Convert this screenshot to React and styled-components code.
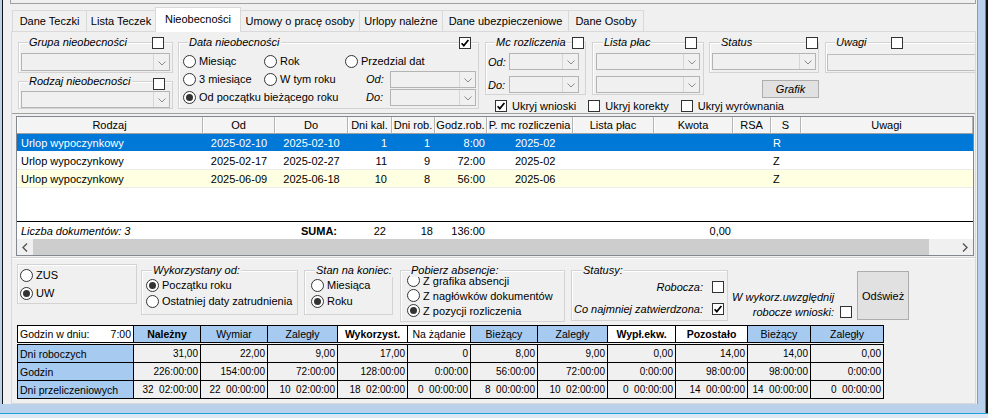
import React from 'react';
import styled, { createGlobalStyle } from 'styled-components';

const GlobalStyle = createGlobalStyle`
  html, body {
    margin: 0;
    padding: 0;
    background: #b9d1ea;
  }
  body {
    font-family: "Liberation Sans", Arial, sans-serif;
    font-size: 11px;
    color: #000;
  }
  *, *::before, *::after {
    box-sizing: border-box;
  }
`;

const Frame = styled.div`
  width: 988px;
  height: 418px;
  overflow: hidden;
  padding: 0 10px 14px 2px;
  background: #b9d1ea;
  box-shadow: inset 0 -4px 0 #dde8f4, inset 0 -5px 0 #1aa3dc, inset -2px 0 0 #111, inset -3px 0 0 #1aa3dc;
`;

const Window = styled.div`
  height: 100%;
  display: flex;
  flex-direction: column;
  background: #f0f0f0;
  border-left: 1px solid #111;
  border-right: 1px solid #9a9a9a;
`;

const TopStub = styled.div`
  height: 4px;
  flex: none;
  margin: 0 1px 0 7px;
  border: 1px solid #a0a0a0;
  border-top: none;
`;

const TabStrip = styled.div`
  height: 27px;
  flex: none;
  display: flex;
  align-items: flex-end;
  padding-left: 10px;
`;

const Tab = styled.div`
  position: relative;
  z-index: ${p => (p.$active ? 2 : 1)};
  width: ${p => p.$w}px;
  height: ${p => (p.$active ? 25 : 21)}px;
  margin: 0 0 ${p => (p.$active ? -1 : 0)}px -1px;
  padding-bottom: ${p => (p.$active ? 3 : 0)}px;
  display: flex;
  align-items: center;
  justify-content: center;
  white-space: nowrap;
  background: ${p => (p.$active ? '#fff' : '#f0f0f0')};
  border: 1px solid #d9d9d9;
  border-bottom: none;
`;

const TabPanel = styled.div`
  flex: 1;
  margin-left: 8px;
  width: 965px;
  display: flex;
  flex-direction: column;
  overflow: hidden;
  border: 1px solid #d9d9d9;
`;

/* ---------- common controls ---------- */

const Group = styled.div`
  position: relative;
  flex: none;
  width: ${p => p.$w}px;
  height: ${p => p.$h}px;
  margin: ${p => p.$m || '0'};
  border: 1px solid #d3d3d3;
  box-shadow: inset 1px 1px 0 #fff;
`;

const GroupTitle = styled.span`
  position: absolute;
  top: -8px;
  left: ${p => p.$x}px;
  padding: 0 1px;
  line-height: 14px;
  font-style: italic;
  white-space: nowrap;
  background: #f0f0f0;
`;

const GroupTick = styled.span`
  position: absolute;
  top: ${p => p.$y}px;
  left: ${p => p.$x}px;
  display: flex;
`;

const CheckBox = styled.span`
  width: 12px;
  height: 12px;
  flex: none;
  display: inline-flex;
  align-items: center;
  justify-content: center;
  border: 1px solid #333;
  background: #fff;
`;

const Check = ({ on }) => (
  <CheckBox>
    {on && (
      <svg width="10" height="10" viewBox="0 0 10 10">
        <path d="M1.6 5.2 L3.8 7.6 L8.4 2" fill="none" stroke="#000" strokeWidth="1.7" />
      </svg>
    )}
  </CheckBox>
);

const RadioCircle = styled.span`
  width: 13px;
  height: 13px;
  flex: none;
  display: inline-flex;
  align-items: center;
  justify-content: center;
  border: 1px solid #333;
  border-radius: 50%;
  background: #fff;
  &::after {
    content: '';
    width: 7px;
    height: 7px;
    border-radius: 50%;
    background: ${p => (p.$on ? '#333' : 'transparent')};
  }
`;

const RadioRow = styled.div`
  display: flex;
  align-items: center;
  gap: 3px;
  height: ${p => p.$h || 16}px;
  white-space: nowrap;
  grid-column: ${p => (p.$span ? `span ${p.$span}` : 'auto')};
`;

const Radio = ({ on, h, span, children }) => (
  <RadioRow $h={h} $span={span}>
    <RadioCircle $on={on} />
    {children}
  </RadioRow>
);

const ComboBox = styled.div`
  width: ${p => p.$w}px;
  height: ${p => p.$h || 17}px;
  flex: none;
  display: flex;
  justify-content: flex-end;
  border: 1px solid #b4b4b4;
  background: #f0f0f0;
`;

const ComboButton = styled.span`
  width: 16px;
  height: 100%;
  display: flex;
  align-items: center;
  justify-content: center;
  padding-top: 2px;
  border-left: 1px solid #d6d6d6;
`;

const Combo = ({ w, h }) => (
  <ComboBox $w={w} $h={h}>
    <ComboButton>
      <svg width="8" height="5" viewBox="0 0 8 5">
        <path d="M0.5 0.5 L4 4 L7.5 0.5" fill="none" stroke="#8a8a8a" strokeWidth="1" />
      </svg>
    </ComboButton>
  </ComboBox>
);

const Caption = styled.span`
  font-style: italic;
  width: ${p => p.$w}px;
  flex: none;
`;

const Button = styled.div`
  flex: none;
  width: ${p => p.$w}px;
  height: ${p => p.$h}px;
  margin: ${p => p.$m || '0'};
  display: flex;
  align-items: center;
  justify-content: center;
  font-style: ${p => (p.$italic ? 'italic' : 'normal')};
  background: #e1e1e1;
  border: 1px solid #adadad;
`;

/* ---------- filter area ---------- */

const FilterArea = styled.div`
  height: 81px;
  flex: none;
  display: flex;
  align-items: flex-start;
  padding-left: 6px;
`;

const Column = styled.div`
  display: flex;
  flex-direction: column;
  flex: none;
  margin: ${p => p.$m || '0'};
`;

const Inner = styled.div`
  display: flex;
  flex-direction: column;
  gap: ${p => p.$gap || 0}px;
  padding: ${p => p.$pad};
`;

const DateGrid = styled.div`
  display: grid;
  grid-template-columns: 81px 81px auto;
  grid-auto-rows: 18px;
  align-items: center;
  padding: 9px 0 0 4px;
`;

const RangeRow = styled.div`
  display: flex;
  align-items: center;
  padding-left: 21px;
`;

const FieldRow = styled.div`
  display: flex;
  align-items: center;
`;

const GroupRow = styled.div`
  display: flex;
  align-items: flex-start;
  margin-top: 10px;
`;

const TextInput = styled.div`
  width: 150px;
  height: 17px;
  margin: 11px 0 0 1px;
  border: 1px solid #bdbdbd;
  background: #f0f0f0;
`;

const OptionRow = styled.div`
  display: flex;
  align-items: center;
  gap: 12px;
  padding-left: 10px;
  margin-top: 1px;
  height: 13px;
`;

const CheckLabel = styled.div`
  display: flex;
  align-items: center;
  gap: ${p => p.$gap || 5}px;
  white-space: nowrap;
  font-style: ${p => (p.$italic ? 'italic' : 'normal')};
`;

const Rule = styled.div`
  flex: none;
  height: ${p => p.$h}px;
  margin-top: ${p => p.$top || 0}px;
  border-top: 1px solid ${p => p.$c};
  border-bottom: ${p => (p.$light ? '1px solid #fff' : 'none')};
`;

/* ---------- documents table ---------- */

const tableCols = '186px 72px 73px 44px 43px 52px 86px 81px 79px 38px 30px 172px';

const Table = styled.div`
  flex: none;
  width: 958px;
  height: 140px;
  margin-left: 4px;
  display: flex;
  flex-direction: column;
  background: #fff;
  border: 1px solid #828790;
`;

const HeadRow = styled.div`
  display: grid;
  grid-template-columns: ${tableCols};
  height: 17px;
  flex: none;
`;

const HeadCell = styled.div`
  display: flex;
  align-items: center;
  justify-content: center;
  white-space: nowrap;
  overflow: hidden;
  background: #f4f4f4;
  border-right: 1px solid #b4b4b4;
  border-bottom: 1px solid #a0a0a0;
  box-shadow: inset 1px 0 0 #fff;
`;

const rowBg = { selected: '#0078d7', plain: '#fff', note: '#ffffe1' };

const BodyRow = styled.div`
  display: grid;
  grid-template-columns: ${tableCols};
  height: 18px;
  flex: none;
  color: ${p => (p.$kind === 'selected' ? '#fff' : '#000')};
  background: ${p => rowBg[p.$kind]};
  border-bottom: 1px solid ${p => (p.$kind === 'selected' ? '#fff' : '#ececec')};
`;

const Cell = styled.div`
  display: flex;
  align-items: center;
  justify-content: ${p => ({ left: 'flex-start', center: 'center', right: 'flex-end' }[p.$align || 'left'])};
  padding: ${p => (p.$align === 'right' ? `0 ${p.$pad || 0}px 0 0` : `0 0 0 ${p.$pad || 0}px`)};
  white-space: nowrap;
  font-style: ${p => (p.$italic ? 'italic' : 'normal')};
  font-weight: ${p => (p.$bold ? 700 : 400)};
  color: ${p => p.$color || 'inherit'};
`;

const TableSpace = styled.div`
  flex: 1;
`;

const FootRow = styled.div`
  display: grid;
  grid-template-columns: ${tableCols};
  height: 18px;
  flex: none;
  border-top: 1px solid #000;
`;

const HScroll = styled.div`
  height: 16px;
  flex: none;
  display: flex;
  background: #f0f0f0;
`;

const ScrollArrow = styled.div`
  width: 16px;
  flex: none;
  display: flex;
  align-items: center;
  justify-content: center;
`;

const ScrollThumb = styled.div`
  width: 896px;
  flex: none;
  background: #cdcdcd;
`;

const ScrollTrack = styled.div`
  flex: 1;
`;

/* ---------- options + summary ---------- */

const OptionsRow = styled.div`
  height: 62px;
  flex: none;
  display: flex;
  align-items: flex-start;
  padding-left: 5px;
`;

const Plain = styled.div`
  flex: none;
  width: ${p => p.$w}px;
  height: ${p => p.$h}px;
  margin: ${p => p.$m};
  padding: ${p => p.$pad};
  display: flex;
  flex-direction: column;
  gap: ${p => p.$gap || 0}px;
  border: 1px solid #d3d3d3;
  box-shadow: inset 1px 1px 0 #fff;
`;

const StatusList = styled.div`
  display: flex;
  flex-direction: column;
  align-items: flex-end;
  gap: 10px;
  padding: 10px 3px 0 0;
`;

const NoteBlock = styled.div`
  flex: none;
  display: flex;
  align-items: flex-end;
  gap: 6px;
  margin: 31px 0 0 4px;
  padding-bottom: 2px;
`;

const NoteText = styled.div`
  font-style: italic;
  text-align: right;
  line-height: 15px;
  margin-bottom: -2px;
`;

const sumCols = '116px 67px 67px 70px 70px 63px 67px 70px 68px 72px 63px 73px';

const SumGrid = styled.div`
  display: grid;
  grid-template-columns: ${sumCols};
  width: 867px;
  margin: ${p => p.$m};
  border-left: 1px solid #000;
  border-top: 1px solid #000;
`;

const SumCell = styled.div`
  height: ${p => p.$h || 18}px;
  display: flex;
  align-items: center;
  justify-content: ${p => ({ left: 'flex-start', center: 'center', right: 'flex-end', split: 'space-between' }[p.$align])};
  padding: 0 2px;
  font-size: ${p => p.$fs || 10}px;
  font-weight: ${p => (p.$bold ? 700 : 400)};
  white-space: pre;
  overflow: hidden;
  background: ${p => p.$bg};
  border-right: 1px solid #000;
  border-bottom: 1px solid #000;
`;

const BLUE = '#a6caf0';

const tabs = [
  ['Dane Teczki', 75],
  ['Lista Teczek', 70],
  ['Nieobecności', 86, true],
  ['Umowy o pracę osoby', 120],
  ['Urlopy należne', 84],
  ['Dane ubezpieczeniowe', 127],
  ['Dane Osoby', 76],
];

const headers = ['Rodzaj', 'Od', 'Do', 'Dni kal.', 'Dni rob.', 'Godz.rob.', 'P. mc rozliczenia', 'Lista płac', 'Kwota', 'RSA', 'S', 'Uwagi'];

const colFmt = [
  { $align: 'left', $pad: 4 },
  { $align: 'center' },
  { $align: 'center' },
  { $align: 'right', $pad: 5 },
  { $align: 'right', $pad: 5 },
  { $align: 'right', $pad: 2 },
  { $align: 'left', $pad: 28 },
  { $align: 'left' },
  { $align: 'right', $pad: 2 },
  { $align: 'left' },
  { $align: 'left', $pad: 2 },
  { $align: 'left' },
];

const docs = [
  { kind: 'selected', cells: ['Urlop wypoczynkowy', '2025-02-10', '2025-02-10', '1', '1', '8:00', '2025-02', '', '', '', 'R', ''] },
  { kind: 'plain', cells: ['Urlop wypoczynkowy', '2025-02-17', '2025-02-27', '11', '9', '72:00', '2025-02', '', '', '', 'Z', ''] },
  { kind: 'note', cells: ['Urlop wypoczynkowy', '2025-06-09', '2025-06-18', '10', '8', '56:00', '2025-06', '', '', '', 'Z', ''] },
];

const sumHeads = [
  ['Należny', BLUE, true],
  ['Wymiar', BLUE],
  ['Zaległy', BLUE],
  ['Wykorzyst.', '#fff', true],
  ['Na żądanie', '#fff'],
  ['Bieżący', BLUE],
  ['Zaległy', BLUE],
  ['Wypł.ekw.', '#fff', true],
  ['Pozostało', '#fff', true],
  ['Bieżący', BLUE],
  ['Zaległy', BLUE],
];

const sumRows = [
  ['Dni roboczych', ['31,00', '22,00', '9,00', '17,00', '0', '8,00', '9,00', '0,00', '14,00', '14,00', '0,00']],
  ['Godzin', ['226:00:00', '154:00:00', '72:00:00', '128:00:00', '0:00:00', '56:00:00', '72:00:00', '0:00:00', '98:00:00', '98:00:00', '0:00:00']],
  ['Dni przeliczeniowych', ['32  02:00:00', '22  00:00:00', '10  02:00:00', '18  02:00:00', '0  00:00:00', '8  00:00:00', '10  02:00:00', '0  00:00:00', '14  00:00:00', '14  00:00:00', '0  00:00:00']],
];

const Arrow = ({ dir }) => (
  <svg width="6" height="9" viewBox="0 0 6 9">
    <path d={dir === 'left' ? 'M5 0.5 L1 4.5 L5 8.5' : 'M1 0.5 L5 4.5 L1 8.5'} fill="none" stroke="#555" strokeWidth="1.4" />
  </svg>
);

export default function App() {
  return (
    <>
      <GlobalStyle />
      <Frame>
        <Window>
          <TopStub />
          <TabStrip>
            {tabs.map(([label, w, active]) => (
              <Tab key={label} $w={w} $active={active}>{label}</Tab>
            ))}
          </TabStrip>

          <TabPanel>
            <FilterArea>
              <Column>
                <Group $w={155} $h={31} $m="10px 0 0 0">
                  <GroupTitle $x={9}>Grupa nieobecności</GroupTitle>
                  <GroupTick $x={133} $y={-6}><Check /></GroupTick>
                  <Inner $pad="10px 0 0 2px">
                    <Combo w={149} h={18} />
                  </Inner>
                </Group>
                <Group $w={155} $h={28} $m="8px 0 0 0">
                  <GroupTitle $x={9}>Rodzaj nieobecności</GroupTitle>
                  <GroupTick $x={134} $y={-4}><Check /></GroupTick>
                  <Inner $pad="9px 0 0 2px">
                    <Combo w={149} />
                  </Inner>
                </Group>
              </Column>

              <Group $w={301} $h={67} $m="10px 0 0 5px">
                <GroupTitle $x={9}>Data nieobecności</GroupTitle>
                <GroupTick $x={280} $y={-6}><Check on /></GroupTick>
                <DateGrid>
                  <Radio>Miesiąc</Radio>
                  <Radio>Rok</Radio>
                  <Radio>Przedzial dat</Radio>
                  <Radio>3 miesiące</Radio>
                  <Radio>W tym roku</Radio>
                  <RangeRow>
                    <Caption $w={24}>Od:</Caption>
                    <Combo w={86} />
                  </RangeRow>
                  <Radio on span={2}>Od początku bieżącego roku</Radio>
                  <RangeRow>
                    <Caption $w={24}>Do:</Caption>
                    <Combo w={86} />
                  </RangeRow>
                </DateGrid>
              </Group>

              <Column $m="0 0 0 6px">
                <GroupRow>
                  <Group $w={101} $h={53}>
                    <GroupTitle $x={9}>Mc rozliczenia</GroupTitle>
                    <GroupTick $x={86} $y={-6}><Check /></GroupTick>
                    <Inner $pad="10px 0 0 2px" $gap={6}>
                      <FieldRow>
                        <Caption $w={21}>Od:</Caption>
                        <Combo w={70} />
                      </FieldRow>
                      <FieldRow>
                        <Caption $w={21}>Do:</Caption>
                        <Combo w={70} />
                      </FieldRow>
                    </Inner>
                  </Group>

                  <Group $w={112} $h={53} $m="0 0 0 6px">
                    <GroupTitle $x={10}>Lista płac</GroupTitle>
                    <GroupTick $x={92} $y={-6}><Check /></GroupTick>
                    <Inner $pad="10px 0 0 3px" $gap={6}>
                      <Combo w={104} />
                      <Combo w={104} />
                    </Inner>
                  </Group>

                  <Column $m="0 0 0 5px">
                    <Group $w={110} $h={31}>
                      <GroupTitle $x={10}>Status</GroupTitle>
                      <GroupTick $x={96} $y={-6}><Check /></GroupTick>
                      <Inner $pad="10px 0 0 2px">
                        <Combo w={104} />
                      </Inner>
                    </Group>
                    <Button $w={57} $h={18} $m="7px 0 0 53px" $italic>Grafik</Button>
                  </Column>

                  <Group $w={160} $h={31} $m="0 0 0 6px">
                    <GroupTitle $x={9}>Uwagi</GroupTitle>
                    <GroupTick $x={65} $y={-6}><Check /></GroupTick>
                    <TextInput />
                  </Group>
                </GroupRow>

                <OptionRow>
                  <CheckLabel><Check on />Ukryj wnioski</CheckLabel>
                  <CheckLabel><Check />Ukryj korekty</CheckLabel>
                  <CheckLabel><Check />Ukryj wyrównania</CheckLabel>
                </OptionRow>
              </Column>
            </FilterArea>

            <Rule $h={3} $c="#a0a0a0" />

            <Table>
              <HeadRow>
                {headers.map(h => (
                  <HeadCell key={h}>{h}</HeadCell>
                ))}
              </HeadRow>
              {docs.map((d, i) => (
                <BodyRow key={i} $kind={d.kind}>
                  {d.cells.map((c, j) => (
                    <Cell key={j} {...colFmt[j]}>{c}</Cell>
                  ))}
                </BodyRow>
              ))}
              <TableSpace />
              <FootRow>
                <Cell $align="left" $pad={4} $italic>Liczba dokumentów: 3</Cell>
                <Cell />
                <Cell $align="right" $pad={11} $bold>SUMA:</Cell>
                <Cell $align="right" $pad={6}>22</Cell>
                <Cell $align="right" $pad={2}>18</Cell>
                <Cell $align="right" $pad={2}>136:00</Cell>
                <Cell />
                <Cell />
                <Cell $align="right" $pad={2}>0,00</Cell>
              </FootRow>
              <HScroll>
                <ScrollArrow><Arrow dir="left" /></ScrollArrow>
                <ScrollThumb />
                <ScrollTrack />
                <ScrollArrow><Arrow dir="right" /></ScrollArrow>
              </HScroll>
            </Table>

            <Rule $h={2} $top={1} $c="#d0d0d0" $light />

            <OptionsRow>
              <Plain $w={120} $h={40} $m="5px 0 0 0" $pad="2px 0 0 2px" $gap={2}>
                <Radio>ZUS</Radio>
                <Radio on>UW</Radio>
              </Plain>

              <Group $w={157} $h={45} $m="11px 0 0 4px">
                <GroupTitle $x={10}>Wykorzystany od:</GroupTitle>
                <Inner $pad="6px 0 0 4px">
                  <Radio on>Początku roku</Radio>
                  <Radio>Ostatniej daty zatrudnienia</Radio>
                </Inner>
              </Group>

              <Group $w={89} $h={45} $m="11px 0 0 6px">
                <GroupTitle $x={10}>Stan na koniec:</GroupTitle>
                <Inner $pad="6px 0 0 6px">
                  <Radio>Miesiąca</Radio>
                  <Radio on>Roku</Radio>
                </Inner>
              </Group>

              <Group $w={165} $h={52} $m="11px 0 0 7px">
                <GroupTitle $x={9}>Pobierz absencje:</GroupTitle>
                <Inner $pad="2px 0 0 6px">
                  <Radio h={15}>Z grafika absencji</Radio>
                  <Radio h={15}>Z nagłówków dokumentów</Radio>
                  <Radio h={15} on>Z pozycji rozliczenia</Radio>
                </Inner>
              </Group>

              <Group $w={157} $h={51} $m="11px 0 0 6px">
                <GroupTitle $x={10}>Statusy:</GroupTitle>
                <StatusList>
                  <CheckLabel $italic $gap={9}>Robocza:<Check /></CheckLabel>
                  <CheckLabel $italic $gap={9}>Co najmniej zatwierdzona:<Check on /></CheckLabel>
                </StatusList>
              </Group>

              <NoteBlock>
                <NoteText>
                  W wykorz.uwzględnij
                  <br />
                  robocze wnioski:
                </NoteText>
                <Check />
              </NoteBlock>

              <Button $w={52} $h={49} $m="12px 0 0 5px">Odśwież</Button>
            </OptionsRow>

            <SumGrid $m="4px 0 0 5px">
              <SumCell $h={17} $fs={10.5} $align="split" $bg="#fff">
                <span>Godzin w dniu:</span>
                <span>7:00</span>
              </SumCell>
              {sumHeads.map(([label, bg, bold], i) => (
                <SumCell key={i} $h={17} $fs={10.5} $align="center" $bg={bg} $bold={bold}>{label}</SumCell>
              ))}
            </SumGrid>

            <SumGrid $m="1px 0 0 5px">
              {sumRows.map(([label, values]) => (
                <React.Fragment key={label}>
                  <SumCell $fs={10.5} $align="left" $bg={BLUE}>{label}</SumCell>
                  {values.map((v, i) => (
                    <SumCell key={i} $align="right" $bg="#f0f0f0">{v}</SumCell>
                  ))}
                </React.Fragment>
              ))}
            </SumGrid>
          </TabPanel>
        </Window>
      </Frame>
    </>
  );
}
